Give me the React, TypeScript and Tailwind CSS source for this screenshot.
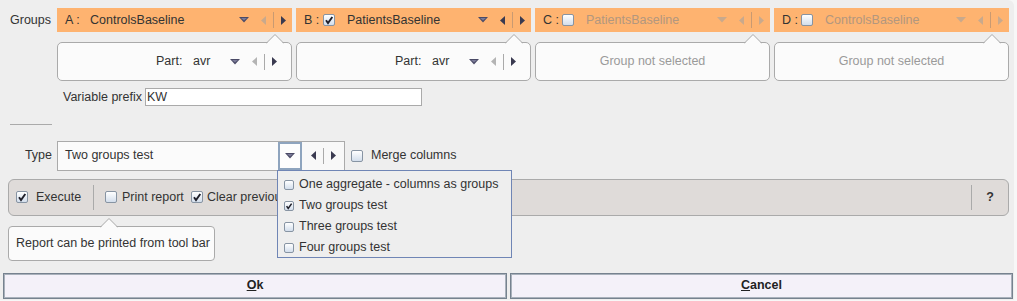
import React from 'react';

const FONT = "font-['Liberation_Sans',Arial,sans-serif]";

// small icon pieces
function DownTri({ off }: { off?: boolean }) {
  return (
    <svg width="10" height="6" viewBox="0 0 10 6">
      <polygon points="0,0 10,0 5,5.5" fill={off ? '#c9a98c' : '#4a4a66'} />
      {!off && <polygon points="2,1 8,1 5,3.6" fill="#7a7a98" />}
    </svg>
  );
}

function LeftTri({ off, onOrange }: { off?: boolean; onOrange?: boolean }) {
  const c = off ? (onOrange ? '#c9a98c' : '#b4b4b4') : '#3a3a50';
  return (
    <svg width="5" height="9" viewBox="0 0 5 9">
      <polygon points="5,0 5,9 0,4.5" fill={c} />
    </svg>
  );
}

function RightTri({ off, onOrange }: { off?: boolean; onOrange?: boolean }) {
  const c = off ? (onOrange ? '#c9a98c' : '#b4b4b4') : '#3a3a50';
  return (
    <svg width="5" height="9" viewBox="0 0 5 9">
      <polygon points="0,0 0,9 5,4.5" fill={c} />
    </svg>
  );
}

function Arrows({ leftOff, rightOff, onOrange }: { leftOff?: boolean; rightOff?: boolean; onOrange?: boolean }) {
  return (
    <div className="flex items-center">
      <LeftTri off={leftOff} onOrange={onOrange} />
      <div className={`mx-[7px] w-px h-[16px] ${onOrange ? 'bg-[#c99a72]' : 'bg-[#aaaaaa]'}`} />
      <RightTri off={rightOff} onOrange={onOrange} />
    </div>
  );
}

function Check({ checked, size = 12 }: { checked?: boolean; size?: number }) {
  return (
    <div
      className="shrink-0 border border-[#8794a3] rounded-[2px] bg-gradient-to-b from-white to-[#d3deec] flex items-center justify-center"
      style={{ width: size, height: size }}
    >
      {checked && (
        <svg width={size - 2} height={size - 2} viewBox="0 0 10 10">
          <path d="M2 5.2 L4 8 L8.3 2" stroke="#1f1f2a" strokeWidth="1.9" fill="none" />
        </svg>
      )}
    </div>
  );
}

function Notch() {
  return (
    <svg className="absolute -top-[9px] right-[7px] z-10" width="18" height="10" viewBox="0 0 18 10">
      <polygon points="0,10 9,1 18,10" fill="#fbfbfb" />
      <polyline points="0,9.5 9,0.5 18,9.5" stroke="#aaaaaa" fill="none" />
    </svg>
  );
}

type Group = { key: string; name: string; checkbox?: boolean; checked?: boolean; on: boolean };

const groups: Group[] = [
  { key: 'A', name: 'ControlsBaseline', on: true },
  { key: 'B', name: 'PatientsBaseline', checkbox: true, checked: true, on: true },
  { key: 'C', name: 'PatientsBaseline', checkbox: true, on: false },
  { key: 'D', name: 'ControlsBaseline', checkbox: true, on: false },
];

function GroupColumn({ g }: { g: Group }) {
  return (
    <div className="w-[235px] flex flex-col">
      <div className="h-[24px] bg-[#feb370] flex items-center pl-[8px] pr-[6px]">
        <span className="text-[#333] w-[16px] whitespace-nowrap">{g.key} :</span>
        {g.checkbox ? (
          <>
            <span className="ml-[3px]"><Check checked={g.checked} /></span>
            <span className={`ml-[12px] ${g.on ? 'text-[#333]' : 'text-[#b2977f]'}`}>{g.name}</span>
          </>
        ) : (
          <span className="ml-[9px] text-[#333]">{g.name}</span>
        )}
        <div className="ml-auto flex items-center">
          <DownTri off={!g.on} />
          <div className="ml-[12px]">
            <Arrows leftOff={g.key !== 'B'} rightOff={!g.on} onOrange />
          </div>
        </div>
      </div>
      <div className="relative mt-[10px] h-[39px] rounded-[5px] border border-[#aaaaaa] bg-[#fbfbfb] flex items-center">
        <Notch />
        {g.on ? (
          <div className="ml-auto mr-[14px] flex items-center">
            <span className="w-[28px] text-[#333]">Part:</span>
            <span className="ml-[9px] w-[37px] text-[#333]">avr</span>
            <DownTri />
            <div className="ml-[12px]">
              <Arrows leftOff rightOff={false} />
            </div>
          </div>
        ) : (
          <div className="w-full text-center text-[#9a9a9a]">Group not selected</div>
        )}
      </div>
    </div>
  );
}

const popupItems = [
  { label: 'One aggregate - columns as groups', checked: false },
  { label: 'Two groups test', checked: true },
  { label: 'Three groups test', checked: false },
  { label: 'Four groups test', checked: false },
];

export default function App() {
  return (
    <div className={`w-[1017px] h-[301px] bg-[#f7f7f7] ${FONT} text-[12.5px] text-[#333] overflow-hidden`}>
      <div className="relative w-[1014px] h-[300px] bg-[#eeeeee] rounded-tr-[6px] flex flex-col">
        {/* Groups */}
        <div className="flex pt-[8px]">
          <div className="w-[57px] h-[24px] pl-[10px] flex items-center">Groups</div>
          <div className="flex gap-[4px]">
            {groups.map((g) => (
              <GroupColumn key={g.key} g={g} />
            ))}
          </div>
        </div>

        {/* Variable prefix */}
        <div className="mt-[7px] flex items-center pl-[63px]">
          <span className="w-[78px] whitespace-nowrap">Variable prefix</span>
          <div className="ml-[4px] w-[277px] h-[18px] border border-[#aaaaaa] bg-white flex items-center pl-[1px]">KW</div>
        </div>

        <div className="mt-[17px] ml-[10px] w-[42px] h-px bg-[#aaaaaa]" />

        {/* Type */}
        <div className="mt-[16px] flex items-center h-[30px]">
          <div className="w-[57px] text-right pr-[5px]">Type</div>
          <div className="w-[288px] h-[30px] border border-[#aaaaaa] flex">
            <div className="flex-1 bg-[#fbfbfb] flex items-center pl-[7px]">Two groups test</div>
            <div className="w-[24px] border-2 border-[#8ea4be] bg-[#fdfdfd] flex items-center justify-center">
              <DownTri />
            </div>
            <div className="w-[42px] bg-[#f8f8f8] flex items-center justify-center">
              <Arrows />
            </div>
          </div>
          <div className="ml-[6px]"><Check /></div>
          <span className="ml-[8px]">Merge columns</span>
        </div>

        {/* Toolbar */}
        <div className="mt-[8px] ml-[8px] w-[1001px] h-[37px] rounded-[6px] border border-[#aaaaaa] bg-[#dfdbd9] flex items-center">
          <div className="ml-[7px]"><Check checked /></div>
          <span className="ml-[8px] w-[43px]">Execute</span>
          <div className="ml-[14px] w-px h-[25px] bg-[#aaaaaa]" />
          <div className="ml-[11px]"><Check /></div>
          <span className="ml-[5px] w-[62px] whitespace-nowrap">Print report</span>
          <div className="ml-[7px]"><Check checked /></div>
          {/* label continues under the open dropdown */}
          <span className="ml-[4px] whitespace-nowrap">Clear previous results</span>
          <div className="ml-auto w-px h-[25px] bg-[#aaaaaa]" />
          <span className="ml-[14px] mr-[14px] font-bold">?</span>
        </div>

        {/* Tooltip */}
        <div className="relative mt-[10px] ml-[8px] w-[207px] h-[35px] rounded-[4px] border border-[#aaaaaa] bg-[#fbfbfb] flex items-center pl-[7px] whitespace-nowrap">
          <svg className="absolute -top-[9px] left-[91px] z-10" width="18" height="10" viewBox="0 0 18 10">
            <polygon points="0,10 9,1 18,10" fill="#fbfbfb" />
            <polyline points="0,9.5 9,0.5 18,9.5" stroke="#aaaaaa" fill="none" />
          </svg>
          Report can be printed from tool bar
        </div>

        {/* Buttons */}
        <div className="mt-[12px] flex gap-[3px] pl-[3px]">
          <button className="w-[504px] h-[26px] border border-[#76828f] shadow-[inset_0_0_0_1px_#a9b1bb] bg-[#f4f1f9] font-bold text-[#222]">
            <span className="underline">O</span>k
          </button>
          <button className="w-[503px] h-[26px] border border-[#76828f] shadow-[inset_0_0_0_1px_#a9b1bb] bg-[#f4f1f9] font-bold text-[#222]">
            <span className="underline">C</span>ancel
          </button>
        </div>

        {/* Type dropdown popup */}
        <div className="absolute left-[277px] top-[170px] w-[235px] h-[88px] border border-[#6f85b5] bg-[#eeeeee] pt-[3px] z-20">
          {popupItems.map((it) => (
            <div key={it.label} className="h-[21px] flex items-center pl-[6px] whitespace-nowrap">
              <Check checked={it.checked} size={10} />
              <span className="ml-[5px]">{it.label}</span>
            </div>
          ))}
        </div>
      </div>
    </div>
  );
}
